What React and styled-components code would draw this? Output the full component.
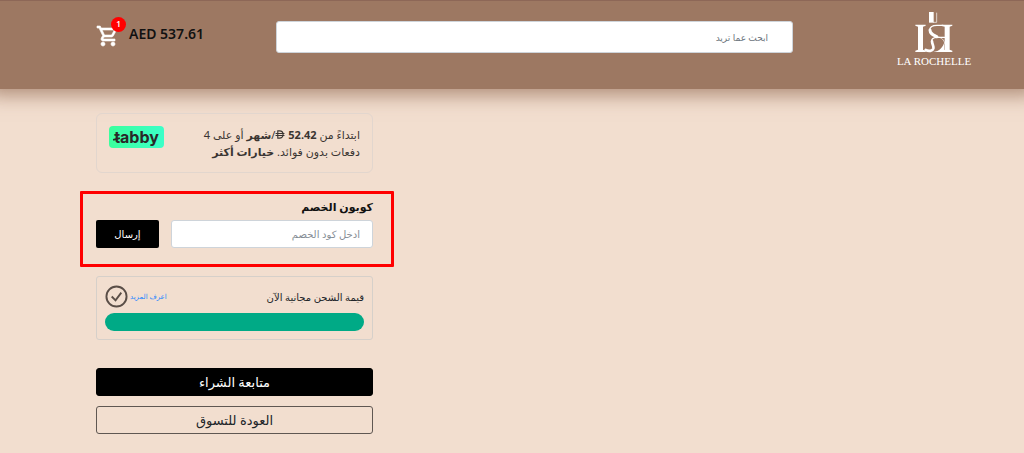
import React from 'react'
import styled, { createGlobalStyle } from 'styled-components'
import { MdOutlineShoppingCart } from 'react-icons/md'

const GlobalStyle = createGlobalStyle`
  *, *::before, *::after {
    box-sizing: border-box;
  }

  body {
    margin: 0;
    background: #f2decf;
    color: #212529;
    font-family: "Noto Sans", "DejaVu Sans", sans-serif;
    font-size: 12px;
  }

  button, input {
    font-family: inherit;
  }
`

const Monogram = () => (
  <svg width="38" height="45" viewBox="0 0 114 135" fill="#fff" aria-hidden="true">
    <path d="M42 0h14v32H42z" />
    <path d="M54 31h11V2" fill="none" stroke="#fff" strokeWidth="2" />
    <path d="M1 38h31v3l-8 3v69l8 3v4H1v-4l8-3V44l-8-3z" />
    <path d="M112 38v3l-8 3v69l8 3v4H82v-4l7-3V44l-9-2V38z" />
    <g fill="none" stroke="#fff" strokeLinecap="round">
      <path d="M84 40H66c-14 0-22 6-22 15" strokeWidth="4" />
      <path d="M45 54c0 11 9 14 20 20" strokeWidth="9" />
      <path d="M89 76H66c-12 0-18 6-16 14" strokeWidth="4" />
      <path d="M51 88c1 11 6 14 4 22-2 7-14 9-23 4" strokeWidth="8" />
      <path d="M66 74c14 2 22 10 23 20" strokeWidth="2" />
    </g>
    <path d="M55 120c18-2 29-14 33-30v30z" />
  </svg>
)

const Dirham = () => (
  <Currency viewBox="0 0 18 16" role="img" aria-label="AED">
    <path d="M5 1.500h3c4.500 0 6.500 2.600 6.500 6.500s-2 6.500-6.500 6.500H5zM1 6.300h16M1 9.700h16" />
  </Currency>
)

const App = () => {
  return (
    <Page dir="rtl" lang="ar">
      <GlobalStyle />
      <Header>
        <Logo href="/">
          <Monogram />
          <LogoName dir="ltr">LA ROCHELLE</LogoName>
        </Logo>
        <SearchInput type="text" placeholder="ابحث عما تريد" aria-label="ابحث عما تريد" />
        <Cart href="/cart" dir="ltr">
          <CartIcon>
            <MdOutlineShoppingCart />
            <Badge>1</Badge>
          </CartIcon>
          <Total>AED 537.61</Total>
        </Cart>
      </Header>

      <Main>
        <Summary>
          <Inset>
            <TabbyCard>
              <TabbyText>
                ابتداءً من <b>52.42</b> <Dirham />/<b>شهر</b> أو على 4 دفعات بدون فوائد. <b>خيارات أكثر</b>
              </TabbyText>
              <TabbyBadge dir="ltr">tabby</TabbyBadge>
            </TabbyCard>
          </Inset>

          <Coupon onSubmit={event => event.preventDefault()}>
            <CouponLabel htmlFor="coupon">كوبون الخصم</CouponLabel>
            <CouponRow>
              <CouponInput id="coupon" type="text" placeholder="ادخل كود الخصم" />
              <CouponButton type="submit">إرسال</CouponButton>
            </CouponRow>
          </Coupon>

          <Inset>
            <ShippingCard>
              <ShippingRow>
                <ShippingTitle>قيمة الشحن مجانية الآن</ShippingTitle>
                <MoreLink href="/shipping">اعرف المزيد</MoreLink>
                <Check viewBox="0 0 24 24" aria-hidden="true">
                  <circle cx="12" cy="12" r="10.500" />
                  <path d="M7 12l4 4 6-8" />
                </Check>
              </ShippingRow>
              <Progress role="progressbar" aria-label="قيمة الشحن" aria-valuenow={100} />
            </ShippingCard>
            <Actions>
              <ActionButton type="button" $solid>متابعة الشراء</ActionButton>
              <ActionButton type="button">العودة للتسوق</ActionButton>
            </Actions>
          </Inset>
        </Summary>
      </Main>
    </Page>
  )
}

const Page = styled.div`
  min-height: 100vh;
  overflow-x: hidden;
`

const Header = styled.header`
  display: grid;
  grid-template-columns: 178px 1fr 180px;
  align-items: start;
  padding: 11px 53px 24px 96px;
  border-top: 1px solid #8d6757;
  background: #9d7862;
  box-shadow: 0 -6px 18px 12px rgba(157, 120, 98, 0.8);
`

const Logo = styled.a`
  display: flex;
  flex-direction: column;
  align-items: center;
  justify-self: start;
  width: 74px;
  color: #fff;
  text-decoration: none;
`

const LogoName = styled.span`
  font-family: "Liberation Serif", serif;
  font-size: 11px;
  line-height: 8px;
  white-space: nowrap;
`

const SearchInput = styled.input`
  width: 100%;
  height: 32px;
  margin-top: 9px;
  padding: 0 24px;
  border: 1px solid #ced4da;
  border-radius: 3px;
  background: #fff;
  font-size: 9px;

  &::placeholder {
    color: #6c757d;
  }
`

const Cart = styled.a`
  display: flex;
  align-items: center;
  gap: 9px;
  margin-top: 8px;
  color: #111;
  text-decoration: none;
`

const CartIcon = styled.span`
  position: relative;
  display: flex;
  padding-top: 4px;
  color: #fff;
  font-size: 24px;

  path:not([fill='none']) {
    stroke: currentColor;
    stroke-width: 0.6;
  }

  path[fill='none'] {
    stroke: none;
  }
`

const Badge = styled.span`
  position: absolute;
  top: -3px;
  right: -6px;
  width: 15px;
  height: 15px;
  border-radius: 50%;
  background: #f00;
  font-size: 8px;
  font-weight: 600;
  line-height: 14px;
  text-align: center;
`

const Total = styled.span`
  font-size: 14px;
  font-weight: 600;
  line-height: 20px;
`

const Main = styled.main`
  display: flex;
  justify-content: flex-end;
  padding: 24px 80px 18px;
`

const Summary = styled.aside`
  flex: 0 1 314px;
`

const Inset = styled.div`
  padding: 0 21px 0 16px;
`

const TabbyCard = styled.section`
  display: flex;
  justify-content: space-between;
  align-items: flex-start;
  padding: 12px;
  border: 1px solid #e2d6ce;
  border-radius: 6px;
`

const TabbyText = styled.p`
  width: 166px;
  margin: 0;
  color: #3a3532;
  font-size: 11px;
  line-height: 17px;
`

const Currency = styled.svg`
  width: 10px;
  height: 9px;
  fill: none;
  stroke: currentColor;
  stroke-width: 2;
`

const TabbyBadge = styled.span`
  position: relative;
  width: 55px;
  border-radius: 4px;
  background: linear-gradient(90deg, #3bff9d, #3bffc8);
  color: #292929;
  font-family: Inter, sans-serif;
  font-size: 16px;
  font-weight: 700;
  line-height: 22px;
  text-align: center;

  &::before {
    content: "";
    position: absolute;
    top: 12px;
    left: 4px;
    width: 7px;
    height: 2px;
    background: currentColor;
    transform: rotate(-14deg);
  }
`

const Coupon = styled.form`
  margin: 18px 0 9px;
  padding: 4px 18px 16px 13px;
  border: 3px solid #f00;
  border-radius: 1px;
`

const CouponLabel = styled.label`
  display: block;
  margin-bottom: 4px;
  color: #111;
  font-size: 11px;
  font-weight: 600;
  line-height: 18px;
`

const CouponRow = styled.div`
  display: flex;
  gap: 12px;
`

const CouponInput = styled.input`
  flex: 1;
  min-width: 0;
  height: 28px;
  padding: 0 12px;
  border: 1px solid #ced4da;
  border-radius: 3px;
  background: #fff;
  font-size: 10px;

  &::placeholder {
    color: #868e96;
  }
`

const CouponButton = styled.button`
  width: 63px;
  height: 28px;
  padding: 0;
  border: 0;
  border-radius: 2px;
  background: #000;
  color: #fff;
  font-size: 10px;
`

const ShippingCard = styled.section`
  padding: 8px;
  border: 1px solid #d6d0ca;
  border-radius: 3px;
`

const ShippingRow = styled.div`
  display: flex;
  align-items: center;
  gap: 2px;
  margin-bottom: 5px;
`

const ShippingTitle = styled.span`
  flex: 1;
  font-size: 10px;
`

const MoreLink = styled.a`
  color: #1f86ff;
  font-size: 7px;
  text-decoration: none;
`

const Check = styled.svg`
  width: 23px;
  height: 23px;
  fill: none;
  stroke: #5a4e47;
  stroke-width: 2;
`

const Progress = styled.div`
  height: 18px;
  border-radius: 9px;
  background: #00aa86;
`

const Actions = styled.div`
  display: grid;
  gap: 10px;
  margin-top: 28px;
`

const ActionButton = styled.button`
  height: 28px;
  padding: 0;
  border: 1px solid ${({ $solid }) => ($solid ? '#000' : '#5f5752')};
  border-radius: 3px;
  background: ${({ $solid }) => ($solid ? '#000' : 'transparent')};
  color: ${({ $solid }) => ($solid ? '#fff' : '#212529')};
  font-size: 13px;
`

export default App
